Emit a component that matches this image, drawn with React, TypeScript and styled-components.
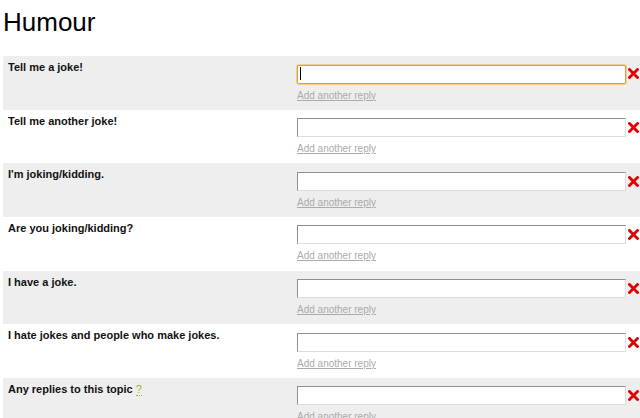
import styled, { createGlobalStyle } from "styled-components";

const GlobalStyle = createGlobalStyle`
  html, body {
    margin: 0;
    padding: 0;
    background: #ffffff;
    font-family: "Liberation Sans", Arial, sans-serif;
  }
`;

const Page = styled.div`
  padding: 0 0 0 3px;
  overflow: hidden;
  height: 418px;
`;

const Title = styled.h1`
  margin: 8px 0 19px 0;
  font-size: 26px;
  font-weight: normal;
  line-height: 29px;
  color: #000;
`;

const Row = styled.div<{ $shaded: boolean }>`
  display: grid;
  grid-template-columns: 294px 1fr;
  height: 53.67px;
  background: ${(p) => (p.$shaded ? "#eeeeee" : "#ffffff")};
`;

const Label = styled.div`
  padding: 5px 0 0 5px;
  font-size: 11px;
  line-height: 13px;
  font-weight: bold;
  color: #111;
`;

const Help = styled.span`
  font-weight: normal;
  color: #99b82a;
  border-bottom: 1px dotted #99b82a;
  margin-left: 3px;
`;

const Answers = styled.div`
  padding-top: 8px;
  display: flex;
  flex-direction: column;
  align-items: flex-start;
`;

const FieldLine = styled.div`
  display: flex;
  align-items: center;
  gap: 2px;
`;

const FieldWrap = styled.div`
  position: relative;
`;

const Field = styled.input<{ $focused?: boolean }>`
  box-sizing: border-box;
  width: 329px;
  height: 19px;
  margin: 0;
  padding: 0 3px;
  background: #fff;
  font-size: 11px;
  font-family: "Liberation Sans", Arial, sans-serif;
  outline: none;
  border: 1px solid;
  border-color: ${(p) =>
    p.$focused ? "#dba045" : "#8f8f8f #dcdcdc #dcdcdc #8f8f8f"};
  border-radius: ${(p) => (p.$focused ? "2px" : "0")};
  box-shadow: ${(p) => (p.$focused ? "0 0 0 1px #efcf95" : "none")};
`;

const Caret = styled.span`
  position: absolute;
  left: 3px;
  top: 3px;
  width: 1px;
  height: 13px;
  background: #000;
`;

const Remove = styled.button`
  display: flex;
  padding: 0;
  border: 0;
  background: none;
  cursor: pointer;
`;

const AddLink = styled.a`
  margin-top: 6px;
  font-size: 10px;
  line-height: 12px;
  color: #aaaaaa;
  text-decoration: underline;
  cursor: pointer;
`;

function Cross() {
  return (
    <svg width="11" height="11" viewBox="0 0 11 11">
      <path
        d="M1.5 1.5 L9.5 9.5 M9.5 1.5 L1.5 9.5"
        stroke="#e00000"
        strokeWidth="2.8"
        strokeLinecap="square"
      />
    </svg>
  );
}

const questions = [
  "Tell me a joke!",
  "Tell me another joke!",
  "I'm joking/kidding.",
  "Are you joking/kidding?",
  "I have a joke.",
  "I hate jokes and people who make jokes.",
  "Any replies to this topic",
];

export default function App() {
  return (
    <>
      <GlobalStyle />
      <Page>
        <Title>Humour</Title>
        {questions.map((q, i) => (
          <Row key={q} $shaded={i % 2 === 0}>
            <Label>
              {q}
              {i === questions.length - 1 && <Help>?</Help>}
            </Label>
            <Answers>
              <FieldLine>
                <FieldWrap>
                  <Field type="text" $focused={i === 0} />
                  {i === 0 && <Caret />}
                </FieldWrap>
                <Remove aria-label="Remove">
                  <Cross />
                </Remove>
              </FieldLine>
              <AddLink>Add another reply</AddLink>
            </Answers>
          </Row>
        ))}
      </Page>
    </>
  );
}
